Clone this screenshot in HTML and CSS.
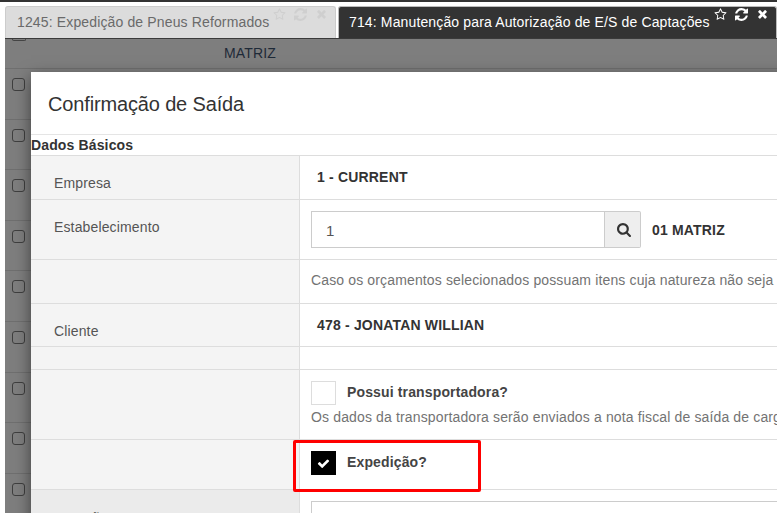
FILE: index.html
```html
<!DOCTYPE html>
<html lang="pt-BR">
<head>
  <meta charset="UTF-8">
  <meta name="viewport" content="width=device-width, initial-scale=1.0">
  <title>Confirmação de Saída</title>
  <link rel="stylesheet" href="styles.css">
</head>
<body>
  <svg class="icon-defs" aria-hidden="true">
    <symbol id="i-star" viewBox="0 0 1792 1792"><path d="M1201 1004l306-297-422-62-189-382-189 382-422 62 306 297-73 421 378-199 377 199zm527-357q0 22-26 48l-363 354 86 500q1 7 1 20 0 50-41 50-19 0-40-12l-449-236-449 236q-22 12-40 12-21 0-31.5-14.5t-10.5-35.5q0-6 2-20l86-500-364-354q-25-27-25-48 0-37 56-46l502-73 225-455q19-41 49-41t49 41l225 455 502 73q56 9 56 46z"/></symbol>
    <symbol id="i-refresh" viewBox="0 0 1536 1536"><path d="M1511 928q0 5-1 7-64 268-268 434.5t-478 166.5q-146 0-282.5-55t-243.5-157l-129 129q-19 19-45 19t-45-19-19-45v-448q0-26 19-45t45-19h448q26 0 45 19t19 45-19 45l-137 137q71 66 161 102t187 36q134 0 250-65t186-179q11-17 53-117 8-23 30-23h192q13 0 22.5 9.5t9.5 22.5zm25-800v448q0 26-19 45t-45 19h-448q-26 0-45-19t-19-45 19-45l138-138q-148-137-349-137-134 0-250 65t-186 179q-11 17-53 117-8 23-30 23h-199q-13 0-22.5-9.5t-9.5-22.5v-7q65-268 270-434.5t480-166.5q146 0 284 55.5t245 156.5l130-129q19-19 45-19t45 19 19 45z"/></symbol>
    <symbol id="i-times" viewBox="0 0 1408 1792"><path d="M1298 1242q0 40-28 68l-136 136q-28 28-68 28t-68-28l-294-294-294 294q-28 28-68 28t-68-28l-136-136q-28-28-28-68t28-68l294-294-294-294q-28-28-28-68t28-68l136-136q28-28 68-28t68 28l294 294 294-294q28-28 68-28t68 28l136 136q28 28 28 68t-28 68l-294 294 294 294q28 28 28 68z"/></symbol>
    <symbol id="i-search" viewBox="0 0 1664 1664"><path d="M1152 704q0-185-131.5-316.5t-316.5-131.5-316.5 131.5-131.5 316.5 131.5 316.5 316.5 131.5 316.5-131.5 131.5-316.5zm512 832q0 52-38 90t-90 38q-54 0-90-38l-343-342q-179 124-399 124-143 0-273.5-55.5t-225-150-150-225-55.5-273.5 55.5-273.5 150-225 225-150 273.5-55.5 273.5 55.5 225 150 150 225 55.5 273.5q0 220-124 399l343 343q37 37 37 90z"/></symbol>
    <symbol id="i-check" viewBox="0 0 1792 1792"><path d="M1671 566q0 40-28 68l-724 724-136 136q-28 28-68 28t-68-28l-136-136-362-362q-28-28-28-68t28-68l136-136q28-28 68-28t68 28l294 295 656-657q28-28 68-28t68 28l136 136q28 28 28 68z"/></symbol>
  </svg>

  <div class="topbar"></div>

  <ul class="tabs">
    <li class="tab">
      <span class="tab-title">1245: Expedição de Pneus Reformados</span>
      <span class="tab-icons">
        <svg class="ico"><use href="#i-star"/></svg>
        <svg class="ico"><use href="#i-refresh"/></svg>
        <svg class="ico"><use href="#i-times"/></svg>
      </span>
    </li>
    <li class="tab active">
      <span class="tab-title">714: Manutenção para Autorização de E/S de Captações</span>
      <span class="tab-icons">
        <svg class="ico"><use href="#i-star"/></svg>
        <svg class="ico"><use href="#i-refresh"/></svg>
        <svg class="ico"><use href="#i-times"/></svg>
      </span>
    </li>
  </ul>

  <div class="screen">
    <div class="list">
      <div class="list-head">
        <span class="head-check"></span>
        <span class="head-title">MATRIZ</span>
      </div>
      <div class="list-row"><span class="row-check"></span></div>
      <div class="list-row"><span class="row-check"></span></div>
      <div class="list-row"><span class="row-check"></span></div>
      <div class="list-row"><span class="row-check"></span></div>
      <div class="list-row"><span class="row-check"></span></div>
      <div class="list-row"><span class="row-check"></span></div>
      <div class="list-row"><span class="row-check"></span></div>
      <div class="list-row"><span class="row-check"></span></div>
      <div class="list-row"><span class="row-check"></span></div>
    </div>

    <div class="modal">
      <h4 class="modal-title">Confirmação de Saída</h4>
      <div class="section-title">Dados Básicos</div>

      <div class="row row-empresa">
        <div class="label">Empresa</div>
        <div class="field"><strong class="value">1 - CURRENT</strong></div>
      </div>
      <div class="row row-estab">
        <div class="label">Estabelecimento</div>
        <div class="field">
          <div class="lookup">
            <div class="lookup-input">1</div>
            <div class="lookup-btn"><svg class="ico-search"><use href="#i-search"/></svg></div>
            <strong class="lookup-name">01 MATRIZ</strong>
          </div>
        </div>
      </div>
      <div class="row row-aviso">
        <div class="label"></div>
        <div class="field"><p class="help">Caso os orçamentos selecionados possuam itens cuja natureza não seja</p></div>
      </div>
      <div class="row row-cliente">
        <div class="label">Cliente</div>
        <div class="field"><strong class="value">478 - JONATAN WILLIAN</strong></div>
      </div>
      <div class="row row-vazio">
        <div class="label"></div>
        <div class="field"></div>
      </div>
      <div class="row row-transp">
        <div class="label"></div>
        <div class="field">
          <div class="check-line">
            <span class="check"></span>
            <b class="check-text">Possui transportadora?</b>
          </div>
          <p class="help">Os dados da transportadora serão enviados a nota fiscal de saída de carga</p>
        </div>
      </div>
      <div class="row row-exped">
        <div class="label"></div>
        <div class="field">
          <div class="check-line">
            <span class="check checked"><svg class="ico-check"><use href="#i-check"/></svg></span>
            <b class="check-text">Expedição?</b>
          </div>
        </div>
      </div>
      <div class="row row-locacao">
        <div class="label">Locação</div>
        <div class="field"><div class="plain-input"></div></div>
      </div>

      <div class="highlight"></div>
    </div>
  </div>
</body>
</html>
```

FILE: styles.css
```css
* {
  margin: 0;
  padding: 0;
  box-sizing: border-box;
  list-style: none;
}

html, body {
  height: 100%;
  overflow: hidden;
}

body {
  background: #fff;
  font-family: "Liberation Sans", Arial, sans-serif;
  font-size: 14px;
  letter-spacing: .14px;
  color: #333;
}

.icon-defs {
  display: none;
}

.topbar {
  height: 2px;
  background: #333;
}

/* tabs */
.tabs {
  display: flex;
  gap: 2px;
  height: 37px;
  margin-left: 5px;
  padding-top: 4px;
  border-bottom: 1px solid #3a3a3a;
}

.tab {
  display: flex;
  width: 331px;
  height: 32px;
  padding-left: 11px;
  background: #dcdcdc;
  border: 1px solid #ccc;
  border-bottom: 0;
  border-radius: 3px 3px 0 0;
  color: #6a6a6a;
}

.tab.active {
  flex: 1;
  padding-left: 10px;
  background: #333;
  border-color: #bbb;
  color: #fff;
}

.tab-title {
  line-height: 31px;
  white-space: nowrap;
}

.tab-icons {
  display: flex;
  gap: 8px;
  padding: 1px 0 0 4px;
  color: #cfcfcf;
}

.tab.active .tab-icons {
  color: #fff;
}

.ico {
  width: 13px;
  height: 13px;
  fill: currentColor;
}

/* list behind the modal */
.screen {
  position: relative;
  margin-left: 5px;
  height: 474px;
  background: #7e7e7e;
  overflow: hidden;
}

.list-head {
  height: 30px;
  border-bottom: 1px solid #6f6f6f;
}

.head-check {
  position: absolute;
  left: 7px;
  top: 0;
  width: 14px;
  height: 2px;
  border: 1px solid #444;
  border-top: 0;
  border-radius: 0 0 3px 3px;
}

.head-title {
  display: block;
  width: 490px;
  line-height: 29px;
  text-align: center;
  color: #1e2a38;
}

.list-row {
  height: 50.6px;
  padding: 9px 0 0 7px;
  border-bottom: 1px solid #6f6f6f;
}

.row-check {
  display: block;
  width: 13px;
  height: 13px;
  border: 1px solid #3f3f3f;
  border-radius: 3px;
}

/* modal */
.modal {
  position: absolute;
  left: 26px;
  top: 33px;
  width: 900px;
  background: #fff;
  box-shadow: 0 5px 15px rgba(0, 0, 0, .5);
}

.modal-title {
  height: 63px;
  padding-left: 17px;
  font-size: 20px;
  font-weight: 400;
  line-height: 65px;
  letter-spacing: -.15px;
  border-bottom: 1px solid #e5e5e5;
}

.section-title {
  height: 21px;
  font-weight: 700;
  line-height: 20px;
  border-bottom: 1px solid #ddd;
}

.row {
  display: grid;
  grid-template-columns: 269px 1fr;
  border-bottom: 1px solid #ddd;
}

.label {
  padding-left: 23px;
  background: #f4f4f4;
  border-right: 1px solid #ddd;
  color: #555;
}

.field {
  padding-left: 11px;
}

.row-empresa { height: 44px; }
.row-estab { height: 60px; }
.row-aviso { height: 44px; }
.row-cliente { height: 43px; }
.row-vazio { height: 23px; }
.row-transp { height: 70px; }
.row-exped { height: 50px; }
.row-locacao { height: 60px; border-bottom: 0; }

.row-empresa .label { padding-top: 19px; }
.row-estab .label { padding-top: 19px; }
.row-cliente .label { padding-top: 19px; }
.row-locacao .label { padding-top: 20px; background: #ebebeb; }

.row-empresa .field { padding: 13px 0 0 17px; }
.row-cliente .field { padding: 13px 0 0 17px; }
.row-estab .field { padding-top: 11px; }
.row-aviso .field { padding-top: 12px; }
.row-transp .field { padding-top: 11px; }
.row-exped .field { padding-top: 11px; }
.row-locacao .field { padding-top: 11px; }

.value, .lookup-name {
  font-weight: 700;
  letter-spacing: .18px;
  white-space: nowrap;
}

.lookup {
  display: flex;
  align-items: center;
}

.lookup-input {
  width: 294px;
  height: 37px;
  padding-left: 14px;
  font-size: 15px;
  line-height: 37px;
  color: #555;
  border: 1px solid #ccc;
}

.lookup-btn {
  display: flex;
  align-items: center;
  justify-content: center;
  width: 36px;
  height: 37px;
  padding-left: 2px;
  background: #eee;
  border: 1px solid #ccc;
  border-left: 0;
  border-radius: 0 2px 2px 0;
}

.ico-search {
  width: 14px;
  height: 14px;
  fill: #333;
}

.lookup-name {
  margin-left: 11px;
}

.help {
  color: #737373;
  white-space: nowrap;
}

.check-line {
  display: flex;
  gap: 11px;
}

.check {
  display: flex;
  align-items: center;
  justify-content: center;
  width: 25px;
  height: 24px;
  border: 1px solid #ddd;
}

.check.checked {
  background: #000;
  border-color: #000;
}

.ico-check {
  width: 13px;
  height: 13px;
  fill: #fff;
}

.check-text {
  line-height: 22px;
  color: #444;
}

.row-transp .help {
  margin-top: 4px;
}

.plain-input {
  height: 40px;
  border: 1px solid #ccc;
}

/* red box marking the field on the screenshot */
.highlight {
  position: absolute;
  left: 262px;
  top: 368px;
  width: 188px;
  height: 52px;
  border: 3px solid #f00;
  border-radius: 2px;
}
```
